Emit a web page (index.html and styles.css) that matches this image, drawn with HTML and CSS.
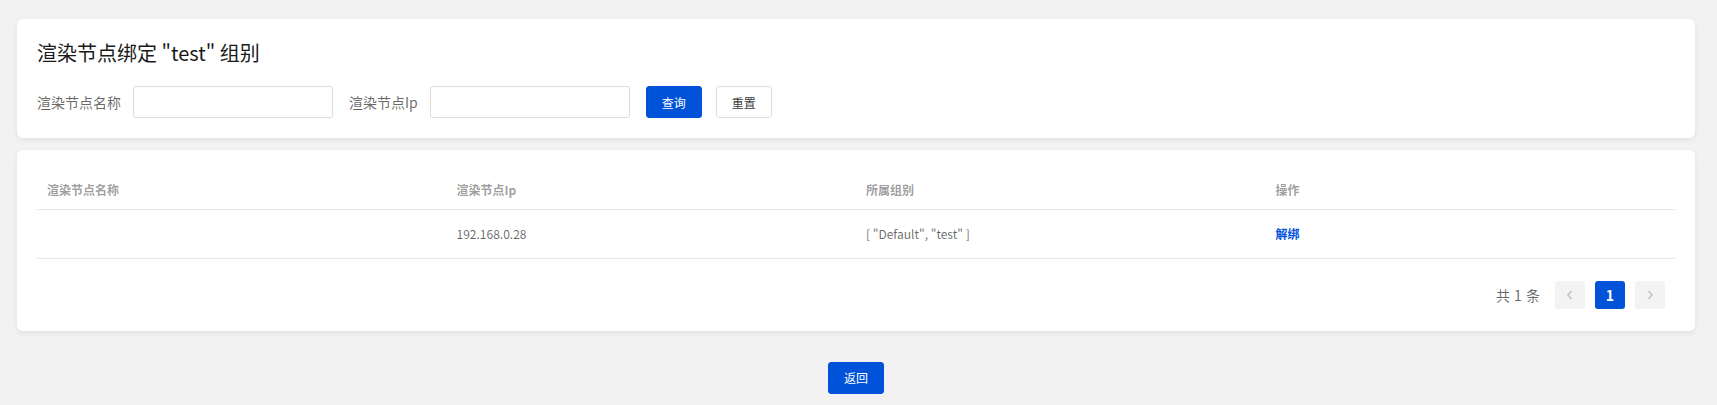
FILE: index.html
```html
<!DOCTYPE html>
<html lang="zh-CN">
<head>
<meta charset="utf-8">
<title>渲染节点绑定</title>
<link rel="stylesheet" href="styles.css">
</head>
<body>
<div class="page">
  <section class="card search-card">
    <h1 class="title">渲染节点绑定 "test" 组别</h1>
    <div class="filters">
      <label class="label">渲染节点名称</label>
      <input class="input" type="text">
      <label class="label label-gap">渲染节点Ip</label>
      <input class="input" type="text">
      <button class="btn btn-primary btn-query">查询</button>
      <button class="btn btn-default">重置</button>
    </div>
  </section>
  <section class="card table-card">
    <table class="table">
      <thead>
        <tr>
          <th>渲染节点名称</th>
          <th>渲染节点Ip</th>
          <th>所属组别</th>
          <th>操作</th>
        </tr>
      </thead>
      <tbody>
        <tr>
          <td></td>
          <td>192.168.0.28</td>
          <td>[ "Default", "test" ]</td>
          <td><a class="link">解绑</a></td>
        </tr>
      </tbody>
    </table>
    <div class="pagination">
      <span class="total">共 1 条</span>
      <span class="page-btn disabled">
        <svg width="10" height="12" viewBox="0 0 10 12"><path d="M6.5 2 3 6l3.5 4" fill="none" stroke="currentColor" stroke-width="1.8"/></svg>
      </span>
      <span class="page-btn active">1</span>
      <span class="page-btn disabled">
        <svg width="10" height="12" viewBox="0 0 10 12"><path d="M3.5 2 7 6 3.5 10" fill="none" stroke="currentColor" stroke-width="1.8"/></svg>
      </span>
    </div>
  </section>
  <div class="footer">
    <button class="btn btn-primary">返回</button>
  </div>
</div>
</body>
</html>
```
FILE: styles.css
```css
* { box-sizing: border-box; }
html, body {
  margin: 0;
  padding: 0;
  background: #f2f2f2;
  font-family: "Noto Sans CJK SC", "Noto Sans", sans-serif;
  color: rgba(0, 0, 0, 0.9);
}
.page {
  padding: 19px 22px 0 17px;
}
.card {
  background: #fff;
  border-radius: 6px;
  box-shadow: 0 2px 6px rgba(0, 0, 0, 0.07);
}
.search-card {
  padding: 20px;
  height: 119px;
}
.title {
  margin: 0;
  font-size: 20px;
  font-weight: 400;
  line-height: 28px;
  color: #1a1a1a;
}
.filters {
  display: flex;
  align-items: center;
  margin-top: 19px;
  height: 32px;
}
.label {
  font-size: 14px;
  color: rgba(0, 0, 0, 0.6);
  margin-right: 12px;
  line-height: 22px;
}
.label-gap { margin-left: 16px; margin-right: 12px; }
.input {
  width: 200px;
  height: 32px;
  border: 1px solid #dcdcdc;
  border-radius: 3px;
  background: #fff;
  outline: none;
  padding: 0 8px;
}
.btn {
  width: 56px;
  height: 32px;
  border-radius: 3px;
  font-size: 12px;
  font-family: inherit;
  border: 1px solid #dcdcdc;
  background: #fff;
  color: rgba(0, 0, 0, 0.8);
  padding: 0;
  cursor: pointer;
}
.btn-primary {
  background: #0052d9;
  border-color: #0052d9;
  color: #fff;
}
.btn-query { margin-left: 16px; }
.btn-default { margin-left: 14px; }
.table-card {
  margin-top: 12px;
  padding: 20px 20px 22px 20px;
}
.table {
  width: 100%;
  border-collapse: collapse;
  table-layout: fixed;
  font-size: 12px;
}
.table th {
  text-align: left;
  font-weight: 700;
  color: rgba(0, 0, 0, 0.4);
  height: 39px;
  padding: 0 10px;
  border-bottom: 1px solid #e7e7e7;
  vertical-align: middle;
}
.table td {
  height: 49px;
  padding: 0 10px;
  color: rgba(0, 0, 0, 0.6);
  border-bottom: 1px solid #e7e7e7;
  vertical-align: middle;
}
.link {
  color: #0052d9;
  font-weight: 700;
  cursor: pointer;
}
.pagination {
  display: flex;
  justify-content: flex-end;
  align-items: center;
  gap: 10px;
  margin-top: 22px;
  padding-right: 10px;
  height: 28px;
}
.total {
  font-size: 14px;
  color: rgba(0, 0, 0, 0.6);
  margin-right: 5px;
  word-spacing: 1px;
}
.page-btn {
  width: 30px;
  height: 28px;
  border-radius: 3px;
  display: flex;
  align-items: center;
  justify-content: center;
  font-size: 14px;
  font-weight: 700;
}
.page-btn.disabled {
  background: #f3f3f3;
  color: #c5c5c5;
}
.page-btn.active {
  background: #0052d9;
  color: #fff;
}
.footer {
  display: flex;
  justify-content: center;
  margin-top: 31px;
}
```
